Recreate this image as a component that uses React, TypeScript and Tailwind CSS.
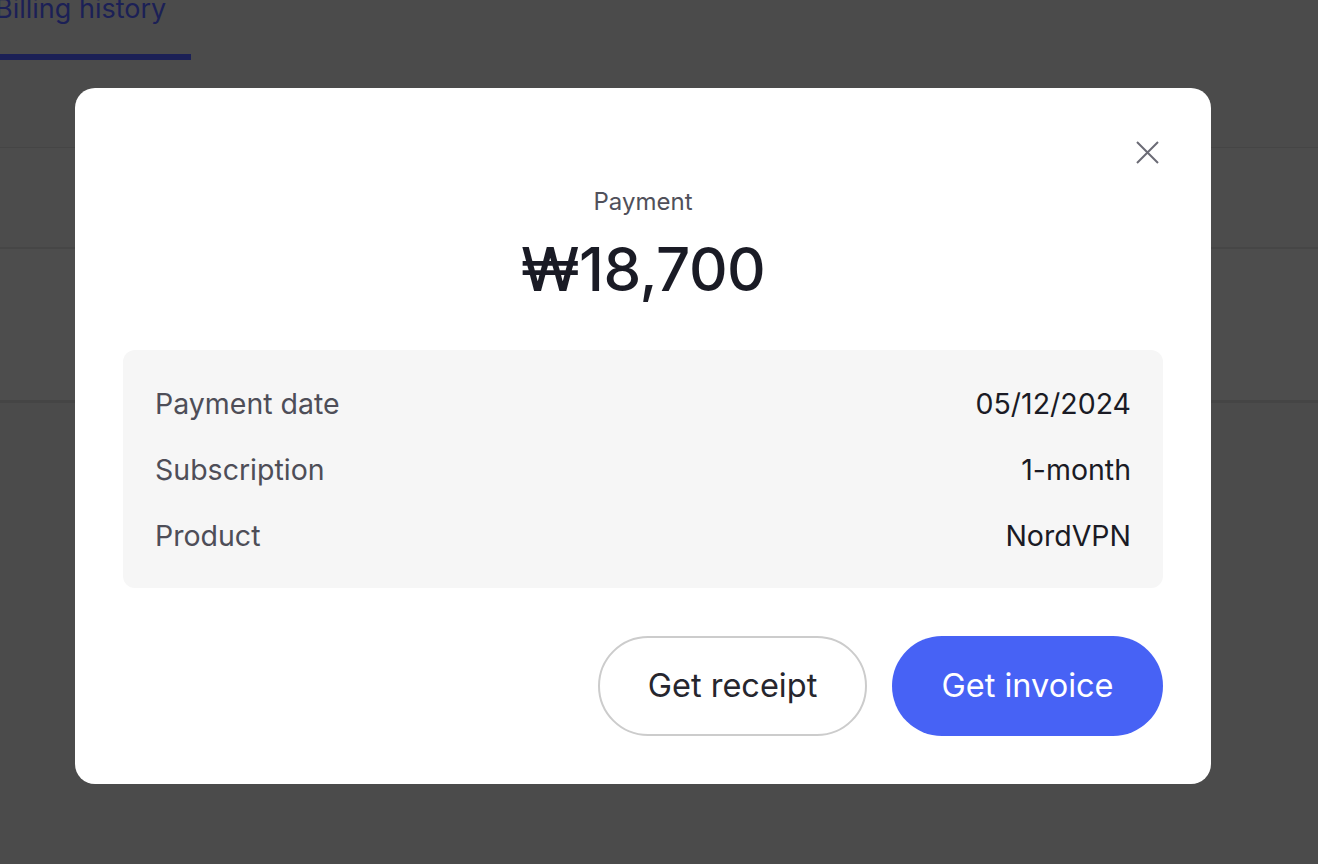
import React from "react";

const details = [
  { label: "Payment date", value: "05/12/2024" },
  { label: "Subscription", value: "1-month" },
  { label: "Product", value: "NordVPN" },
];

function CloseIcon() {
  return (
    <svg width="23" height="23" viewBox="0 0 23 23" fill="none">
      <path d="M1 1L22 22M22 1L1 22" stroke="#6b6b75" strokeWidth="2" />
    </svg>
  );
}

export default function App() {
  return (
    <div className="relative h-[864px] w-[1318px] overflow-hidden bg-[#4b4b4b] font-['Inter',sans-serif]">
      {/* dimmed page behind */}
      <div className="flex flex-col">
        <div className="h-[148px] border-b border-[#454545]">
          <div className="flex w-[191px] flex-col">
            <span className="-ml-[5px] -mt-[8px] whitespace-nowrap text-[27px] leading-[34px] text-[#1b2056]">
              Billing history
            </span>
            <div className="mt-[28px] h-[6px] bg-[#1b2056]" />
          </div>
        </div>
        <div className="h-[101px] border-b-2 border-[#464646] bg-[#4c4c4c]" />
        <div className="h-[154px] border-b-[3px] border-[#454545] bg-[#4d4d4d]" />
      </div>

      {/* modal */}
      <div className="absolute inset-0 pl-[75px] pt-[88px]">
        <div className="relative flex w-[1136px] flex-col rounded-[20px] bg-white px-12 pb-12 pt-[100px]">
          <button className="absolute right-[52px] top-[53px]">
            <CloseIcon />
          </button>
          <div className="text-center text-[24px] leading-[28px] text-[#50505a]">Payment</div>
          <div className="mt-[16px] text-center text-[60px] font-medium leading-[74px] tracking-[-0.5px] text-[#1a1b25]">
            ₩18,700
          </div>
          <div className="mt-[44px] flex flex-col gap-[31px] rounded-[12px] bg-[#f6f6f6] px-8 pb-[35px] pt-[36px]">
            {details.map((d) => (
              <div key={d.label} className="flex items-center justify-between text-[28.5px] leading-[35px]">
                <span className="text-[#4e4e58]">{d.label}</span>
                <span className="text-[#1a1b25]">{d.value}</span>
              </div>
            ))}
          </div>
          <div className="mt-[48px] flex justify-end gap-[25px] text-[32.5px]">
            <button className="h-[100px] w-[269px] rounded-full border-2 border-[#cccccc] text-[#26262e]">
              Get receipt
            </button>
            <button className="h-[100px] w-[271px] rounded-full bg-[#4762f5] text-white">
              Get invoice
            </button>
          </div>
        </div>
      </div>
    </div>
  );
}
